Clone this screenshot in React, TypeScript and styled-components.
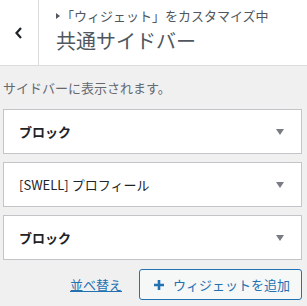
import React from "react"
import styled, { createGlobalStyle } from "styled-components"

const GlobalStyle = createGlobalStyle`
  html, body {
    margin: 0;
    padding: 0;
    background: #f0f0f1;
    font-family: "Noto Sans CJK JP", "Noto Sans", "Liberation Sans", sans-serif;
  }
`

const Panel = styled.div`
  width: 307px;
  height: 306px;
  overflow: hidden;
  background: #f0f0f1;
`

const Header = styled.div`
  display: flex;
  height: 65px;
  background: #fff;
  border-bottom: 1px solid #dcdcde;
`

const BackButton = styled.div`
  width: 38px;
  flex: none;
  display: flex;
  align-items: center;
  justify-content: center;
  border-right: 1px solid #dcdcde;
  color: #1d2327;
`

const TitleBlock = styled.div`
  display: flex;
  flex-direction: column;
  padding: 6px 0 0 17px;
`

const Crumb = styled.div`
  display: flex;
  align-items: center;
  font-size: 13px;
  line-height: 20px;
  color: #50575e;
`

const CrumbArrow = styled.span`
  width: 0;
  height: 0;
  border-top: 3px solid transparent;
  border-bottom: 3px solid transparent;
  border-left: 4px solid #50575e;
  margin-right: 1px;
`

const Title = styled.div`
  font-size: 20px;
  line-height: 28px;
  color: #50575e;
  margin-top: 1px;
`

const Description = styled.p`
  margin: 0;
  padding: 13px 0 0 3px;
  font-size: 13px;
  line-height: 18px;
  color: #646970;
`

const WidgetList = styled.div`
  display: flex;
  flex-direction: column;
  gap: 8px;
  margin: 12px 5px 0 3px;
`

const Widget = styled.div`
  display: flex;
  align-items: center;
  justify-content: space-between;
  height: 43px;
  padding: 0 17px 0 15px;
  background: #fff;
  border: 1px solid #c3c4c7;
`

const WidgetTitle = styled.span<{ $bold?: boolean }>`
  font-size: 13px;
  font-weight: ${(p) => (p.$bold ? 700 : 400)};
  color: #1d2327;
`

const Caret = styled.span`
  width: 0;
  height: 0;
  border-left: 4px solid transparent;
  border-right: 4px solid transparent;
  border-top: 6px solid #787c82;
`

const Actions = styled.div`
  display: flex;
  align-items: center;
  justify-content: flex-end;
  gap: 17px;
  margin: 9px 5px 0 0;
`

const ReorderLink = styled.a`
  font-size: 13px;
  color: #2271b1;
  text-decoration: underline;
`

const AddButton = styled.button`
  display: flex;
  align-items: center;
  gap: 8px;
  height: 31px;
  width: 163px;
  padding: 0 0 0 13px;
  font-family: inherit;
  font-size: 13px;
  color: #2271b1;
  background: #f6f7f7;
  border: 1px solid #2271b1;
  border-radius: 3px;
`

const widgets = [
  { title: "ブロック", bold: true },
  { title: "[SWELL] プロフィール", bold: false },
  { title: "ブロック", bold: true },
]

export default function App() {
  return (
    <Panel>
      <GlobalStyle />
      <Header>
        <BackButton>
          <svg width="10" height="14" viewBox="0 0 10 14">
            <path d="M7 2 L2.5 7 L7 12" fill="none" stroke="currentColor" strokeWidth="2.2" />
          </svg>
        </BackButton>
        <TitleBlock>
          <Crumb>
            <CrumbArrow />
            「ウィジェット」をカスタマイズ中
          </Crumb>
          <Title>共通サイドバー</Title>
        </TitleBlock>
      </Header>
      <Description>サイドバーに表示されます。</Description>
      <WidgetList>
        {widgets.map((w, i) => (
          <Widget key={i}>
            <WidgetTitle $bold={w.bold}>{w.title}</WidgetTitle>
            <Caret />
          </Widget>
        ))}
      </WidgetList>
      <Actions>
        <ReorderLink href="#">並べ替え</ReorderLink>
        <AddButton>
          <svg width="12" height="12" viewBox="0 0 12 12">
            <path d="M6 1 V11 M1 6 H11" stroke="#2271b1" strokeWidth="2.6" />
          </svg>
          ウィジェットを追加
        </AddButton>
      </Actions>
    </Panel>
  )
}
